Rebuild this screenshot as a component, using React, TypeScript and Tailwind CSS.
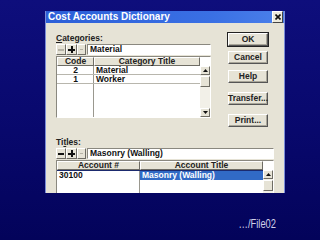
import React from "react";

const FONT = "font-['Liberation_Sans',Arial,sans-serif]";

function Raised({ children, className = "" }: { children?: React.ReactNode; className?: string }) {
  return (
    <div
      className={
        "flex items-center justify-center bg-[#e6e3d6] border border-t-white border-l-white border-b-[#6e6c64] border-r-[#6e6c64] " +
        className
      }
    >
      {children}
    </div>
  );
}

function DlgButton({ label, def = false, className = "" }: { label: string; def?: boolean; className?: string }) {
  return (
    <div
      className={
        (def ? "border border-[#222] " : "border border-transparent ") +
        "h-[15px] w-[42px] " +
        className
      }
    >
      <div className="h-full w-full flex items-center justify-center bg-[#e6e3d6] border border-t-white border-l-white border-b-[#555] border-r-[#555] shadow-[inset_-1px_-1px_0_#a9a699]">
        <span className="text-[8.5px] font-bold text-[#222] leading-none">{label}</span>
      </div>
    </div>
  );
}

function ToolRow({ text, minusEnabled, width }: { text: string; minusEnabled: boolean; width: string }) {
  return (
    <div className={"flex h-[11px] " + width}>
      <Raised className="w-[10px] h-[11px]">
        <span className={"block w-[6px] h-[2px] " + (minusEnabled ? "bg-[#111]" : "bg-[#b5b2a6]")} />
      </Raised>
      <Raised className="w-[11px] h-[11px] relative">
        <span className="absolute w-[7px] h-[2px] bg-[#111]" />
        <span className="absolute w-[2px] h-[7px] bg-[#111]" />
      </Raised>
      <Raised className="w-[9px] h-[11px]">
        <span className="block w-[3px] h-[1px] bg-[#b5b2a6]" />
      </Raised>
      <div className="flex-1 ml-[1px] bg-white border border-t-[#8a887f] border-l-[#8a887f] border-b-white border-r-white flex items-center pl-[2px]">
        <span className="text-[8.5px] font-bold text-[#111] leading-none">{text}</span>
      </div>
    </div>
  );
}

function HeaderCell({ label, className = "" }: { label: string; className?: string }) {
  return (
    <div
      className={
        "h-[9px] flex items-center justify-center bg-[#e6e3d6] border border-t-white border-l-white border-b-[#6e6c64] border-r-[#6e6c64] " +
        className
      }
    >
      <span className="text-[8.5px] font-bold text-[#222] leading-none">{label}</span>
    </div>
  );
}

function Arrow({ up }: { up: boolean }) {
  return (
    <Raised className="w-[10px] h-[9px]">
      <svg width="5" height="3" viewBox="0 0 5 3">
        {up ? <polygon points="2.5,0 5,3 0,3" fill="#111" /> : <polygon points="0,0 5,0 2.5,3" fill="#111" />}
      </svg>
    </Raised>
  );
}

export default function App() {
  return (
    <div
      className={
        "w-[320px] h-[240px] overflow-hidden bg-[linear-gradient(180deg,#0e0e7c_0%,#08086c_55%,#03035a_100%)] flex flex-col " +
        FONT
      }
    >
      <div className="pt-[11px] pl-[45px]">
        <div className="w-[240px] h-[182px] bg-[#e6e3d6] flex flex-col overflow-hidden border-l border-r border-[#7a8cd8]">
          {/* Title bar */}
          <div className="h-[16px] bg-[linear-gradient(90deg,#2c5fd8,#3a70e4_70%,#4b80ea)] flex items-center pl-[2px] pr-[1px]">
            <span className="text-white text-[10px] font-bold leading-none flex-1">Cost Accounts Dictionary</span>
            <div className="w-[11px] h-[12px] bg-[#ece9dc] border border-t-white border-l-white border-b-[#444] border-r-[#444] flex items-center justify-center">
              <svg width="6" height="6" viewBox="0 0 6 6">
                <path d="M0.5 0.5 L5.5 5.5 M5.5 0.5 L0.5 5.5" stroke="#111" strokeWidth="1.6" />
              </svg>
            </div>
          </div>

          {/* Body */}
          <div className="flex-1 pl-[10px] flex flex-col">
            <div className="flex pt-[9px]">
              {/* Categories */}
              <div className="w-[155px] flex flex-col">
                <div className="h-[12px] flex items-center pt-[1px]">
                  <span className="text-[8.5px] font-bold text-[#222] leading-none">
                    <span className="underline">C</span>ategories:
                  </span>
                </div>
                <ToolRow text="Material" minusEnabled={false} width="w-[155px]" />
                <div className="mt-[1px] h-[62px] bg-white border border-t-[#8a887f] border-l-[#8a887f] border-b-white border-r-white flex">
                  <div className="w-[143px] flex flex-col">
                    <div className="flex">
                      <HeaderCell label="Code" className="w-[37px]" />
                      <HeaderCell label="Category Title" className="w-[106px]" />
                    </div>
                    <div className="flex-1 flex relative">
                      <div className="w-[37px] border-r border-[#9a988f]" />
                      <div className="flex-1" />
                      <div className="absolute inset-0 flex flex-col">
                        <div className="h-[9px] flex border-b border-[#b8b6ad]">
                          <div className="w-[37px] flex items-center justify-center">
                            <span className="text-[8.5px] font-bold text-[#111] leading-none">2</span>
                          </div>
                          <div className="flex-1 flex items-center pl-[2px]">
                            <span className="text-[8.5px] font-bold text-[#111] leading-none">Material</span>
                          </div>
                        </div>
                        <div className="h-[9px] flex border-b border-[#b8b6ad]">
                          <div className="w-[37px] flex items-center justify-center">
                            <span className="text-[8.5px] font-bold text-[#111] leading-none">1</span>
                          </div>
                          <div className="flex-1 flex items-center pl-[2px]">
                            <span className="text-[8.5px] font-bold text-[#111] leading-none">Worker</span>
                          </div>
                        </div>
                      </div>
                    </div>
                  </div>
                  <div className="w-[10px] flex flex-col">
                    <div className="h-[9px] bg-white" />
                    <div className="flex-1 flex flex-col bg-[#f2f0e8]">
                      <Arrow up />
                      <Raised className="w-[10px] h-[11px] mt-[1px]" />
                      <div className="flex-1" />
                      <Arrow up={false} />
                    </div>
                  </div>
                </div>
              </div>

              {/* Buttons */}
              <div className="ml-[16px] flex flex-col">
                <DlgButton label="OK" def />
                <DlgButton label="Cancel" className="mt-[3px]" />
                <DlgButton label="Help" className="mt-[4px]" />
                <DlgButton label="Transfer..." className="mt-[7px]" />
                <DlgButton label="Print..." className="mt-[7px]" />
              </div>
            </div>

            {/* Titles */}
            <div className="mt-[8px] flex flex-col w-[218px]">
              <div className="h-[12px] flex items-center">
                <span className="text-[8.5px] font-bold text-[#222] leading-none">
                  Ti<span className="underline">t</span>les:
                </span>
              </div>
              <ToolRow text="Masonry (Walling)" minusEnabled width="w-[218px]" />
              <div className="mt-[1px] h-[40px] bg-white border border-t-[#8a887f] border-l-[#8a887f] border-b-white border-r-white flex">
                <div className="w-[206px] flex flex-col">
                  <div className="flex">
                    <HeaderCell label="Account #" className="w-[83px]" />
                    <HeaderCell label="Account Title" className="w-[123px]" />
                  </div>
                  <div className="flex-1 flex relative border-t border-[#1b2a6e]">
                    <div className="w-[83px] border-r border-[#9a988f]" />
                    <div className="flex-1" />
                    <div className="absolute inset-0 flex flex-col">
                      <div className="h-[9px] flex">
                        <div className="w-[83px] flex items-center pl-[2px]">
                          <span className="text-[8.5px] font-bold text-[#111] leading-none">30100</span>
                        </div>
                        <div className="flex-1 flex items-center pl-[2px] bg-[#316ac5]">
                          <span className="text-[8.5px] font-bold text-white leading-none">Masonry (Walling)</span>
                        </div>
                      </div>
                    </div>
                  </div>
                </div>
                <div className="w-[10px] flex flex-col">
                  <div className="h-[9px] bg-white" />
                  <div className="flex-1 flex flex-col bg-[#f2f0e8]">
                    <Arrow up />
                    <Raised className="w-[10px] h-[11px] mt-[1px]" />
                  </div>
                </div>
              </div>
            </div>
          </div>
        </div>
      </div>
      <div className="flex justify-end pr-[44px] pt-[25px]">
        <span className="text-[12px] text-[#d0d0e8] leading-none origin-right scale-x-[0.78] inline-block">…/File02</span>
      </div>
    </div>
  );
}
